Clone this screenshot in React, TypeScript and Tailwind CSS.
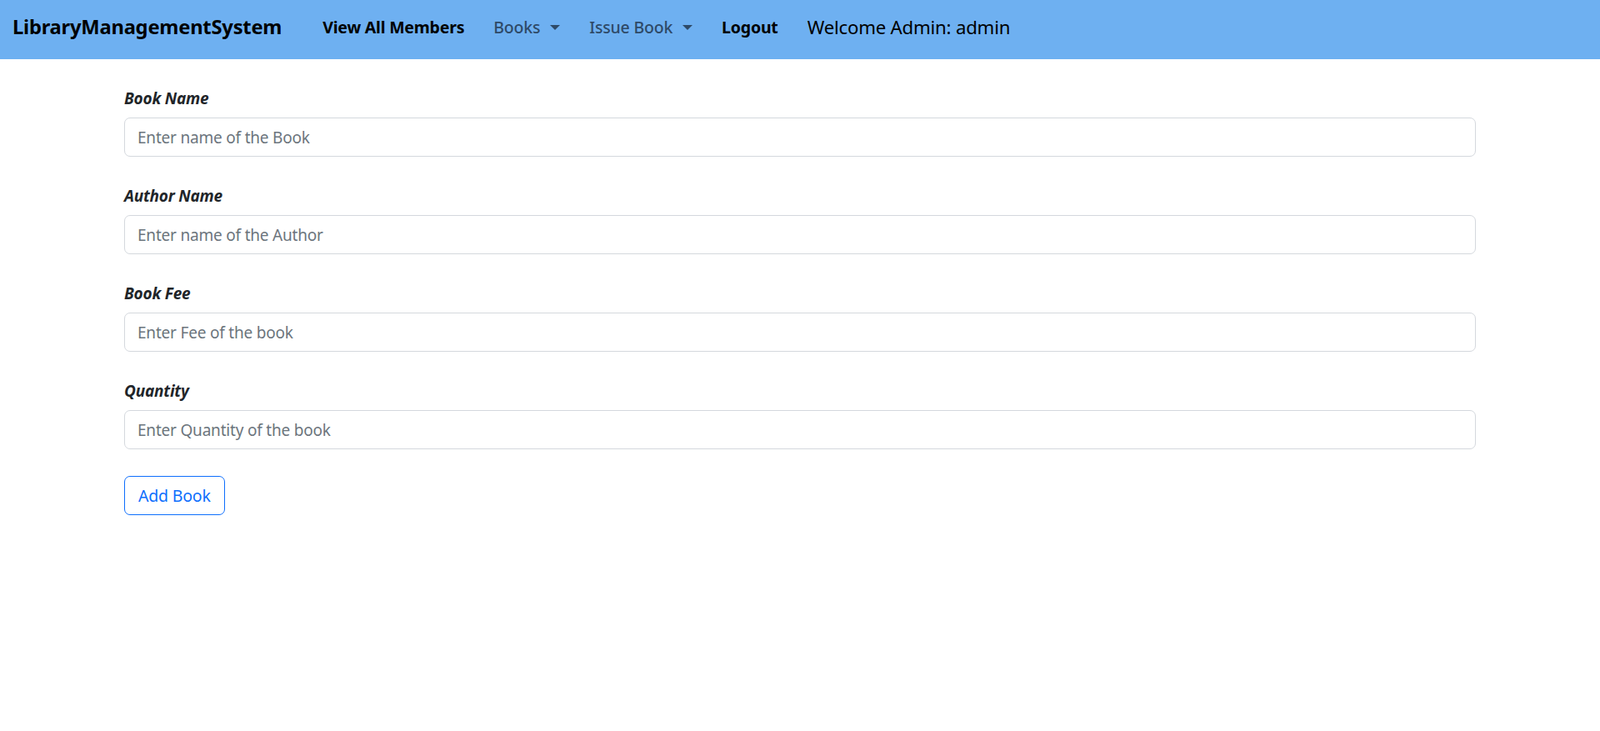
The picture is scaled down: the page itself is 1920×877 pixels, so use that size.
const fields = [
  { label: "Book Name", placeholder: "Enter name of the Book" },
  { label: "Author Name", placeholder: "Enter name of the Author" },
  { label: "Book Fee", placeholder: "Enter Fee of the book" },
  { label: "Quantity", placeholder: "Enter Quantity of the book" },
];

function Caret() {
  return (
    <span className="ml-[12px] inline-block w-0 h-0 border-l-[6px] border-r-[6px] border-t-[6px] border-l-transparent border-r-transparent border-t-[#2e4a68] align-middle" />
  );
}

export default function App() {
  return (
    <div className="min-h-screen bg-white font-['Segoe_UI','Noto_Sans',sans-serif] tracking-[-0.2px] text-[#212529]">
      {/* Navbar */}
      <nav className="w-full h-[71px] bg-[#6eb0f1] flex items-center pl-[15px] pb-[5px]">
        <span className="text-[23.7px] font-bold text-black leading-none">LibraryManagementSystem</span>
        <ul className="flex items-center ml-[49px] gap-[35px] text-[19.5px]">
          <li className="font-bold text-black cursor-pointer">View All Members</li>
          <li className="text-[#2e4a68] font-medium cursor-pointer flex items-center">
            Books
            <Caret />
          </li>
          <li className="text-[#2e4a68] font-medium cursor-pointer flex items-center">
            Issue Book
            <Caret />
          </li>
          <li className="font-bold text-black cursor-pointer">Logout</li>
          <li className="text-[22.2px] text-black">Welcome Admin: admin</li>
        </ul>
      </nav>

      {/* Add book form */}
      <form className="w-[1622px] mx-auto pt-[32px]">
        {fields.map((f) => (
          <div key={f.label} className="mb-[32px]">
            <label className="block text-[19px] leading-[30px] font-bold italic mb-[8px]">{f.label}</label>
            <input
              type="text"
              placeholder={f.placeholder}
              className="w-full h-[47px] px-[15px] text-[19px] border border-[#d4d8dd] rounded-[7px] placeholder:text-[#6c757d] focus:outline-none"
            />
          </div>
        ))}
        <button
          type="button"
          className="h-[47px] px-[16px] text-[19.5px] text-[#0d6efd] border border-[#0d6efd] rounded-[7px] bg-white"
        >
          Add Book
        </button>
      </form>
    </div>
  );
}
